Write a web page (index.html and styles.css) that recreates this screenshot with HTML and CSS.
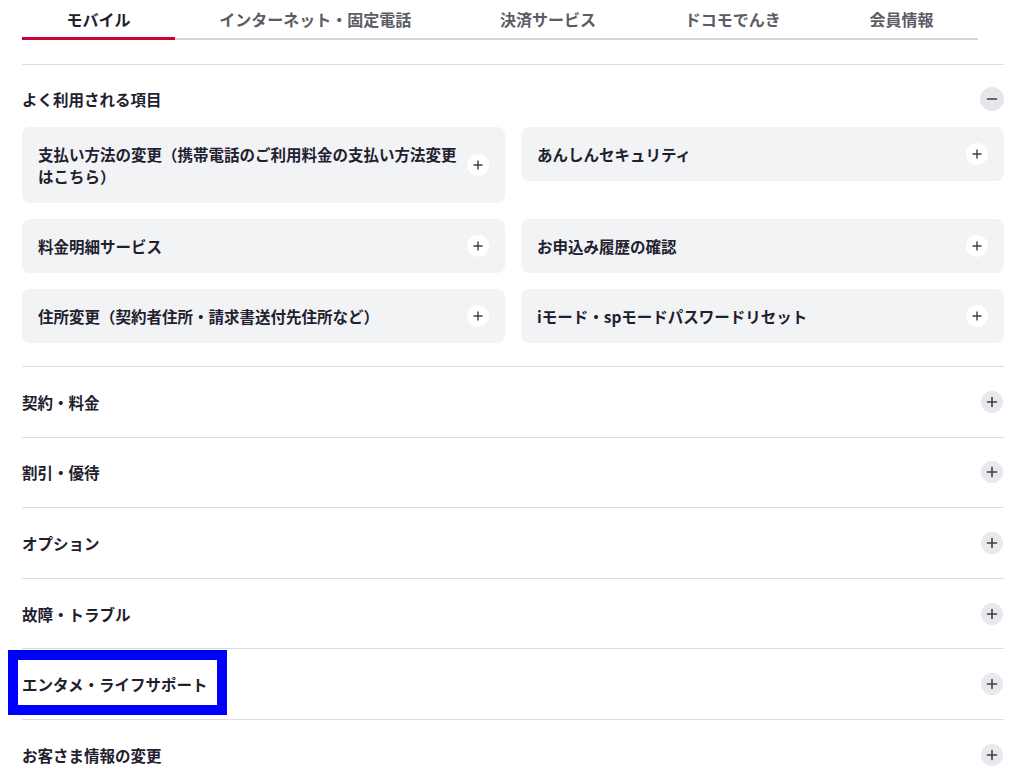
FILE: index.html
```html
<!DOCTYPE html>
<html lang="ja">
<head>
<meta charset="utf-8">
<link rel="stylesheet" href="styles.css">
</head>
<body>
<div class="page">
  <nav class="tabs">
    <div class="tab active">モバイル</div>
    <div class="tab">インターネット・固定電話</div>
    <div class="tab">決済サービス</div>
    <div class="tab">ドコモでんき</div>
    <div class="tab">会員情報</div>
  </nav>

  <div class="acc">
    <section class="sec open">
      <div class="sec-head">
        <span class="sec-title">よく利用される項目</span>
        <span class="ic ic-minus"><svg viewBox="0 0 24 24" width="24" height="24"><path d="M7.5 12h9" stroke="#3a3f4b" stroke-width="1.6" stroke-linecap="round"/></svg></span>
      </div>
      <div class="cards">
        <div class="card"><span class="card-text">支払い方法の変更（携帯電話のご利用料金の支払い方法変更はこちら）</span><span class="ic ic-card"><svg viewBox="0 0 22 22" width="22" height="22"><path d="M11 7v8M7 11h8" stroke="#3a3f4b" stroke-width="1.4" stroke-linecap="round"/></svg></span></div>
        <div class="card"><span class="card-text">あんしんセキュリティ</span><span class="ic ic-card"><svg viewBox="0 0 22 22" width="22" height="22"><path d="M11 7v8M7 11h8" stroke="#3a3f4b" stroke-width="1.4" stroke-linecap="round"/></svg></span></div>
        <div class="card"><span class="card-text">料金明細サービス</span><span class="ic ic-card"><svg viewBox="0 0 22 22" width="22" height="22"><path d="M11 7v8M7 11h8" stroke="#3a3f4b" stroke-width="1.4" stroke-linecap="round"/></svg></span></div>
        <div class="card"><span class="card-text">お申込み履歴の確認</span><span class="ic ic-card"><svg viewBox="0 0 22 22" width="22" height="22"><path d="M11 7v8M7 11h8" stroke="#3a3f4b" stroke-width="1.4" stroke-linecap="round"/></svg></span></div>
        <div class="card"><span class="card-text">住所変更（契約者住所・請求書送付先住所など）</span><span class="ic ic-card"><svg viewBox="0 0 22 22" width="22" height="22"><path d="M11 7v8M7 11h8" stroke="#3a3f4b" stroke-width="1.4" stroke-linecap="round"/></svg></span></div>
        <div class="card"><span class="card-text">iモード・spモードパスワードリセット</span><span class="ic ic-card"><svg viewBox="0 0 22 22" width="22" height="22"><path d="M11 7v8M7 11h8" stroke="#3a3f4b" stroke-width="1.4" stroke-linecap="round"/></svg></span></div>
      </div>
    </section>

    <section class="sec">
      <div class="sec-head"><span class="sec-title">契約・料金</span><span class="ic ic-plus"><svg viewBox="0 0 22 22" width="22" height="22"><path d="M11 6.5v9M6.5 11h9" stroke="#3a3f4b" stroke-width="1.6" stroke-linecap="round"/></svg></span></div>
    </section>
    <section class="sec">
      <div class="sec-head"><span class="sec-title">割引・優待</span><span class="ic ic-plus"><svg viewBox="0 0 22 22" width="22" height="22"><path d="M11 6.5v9M6.5 11h9" stroke="#3a3f4b" stroke-width="1.6" stroke-linecap="round"/></svg></span></div>
    </section>
    <section class="sec">
      <div class="sec-head"><span class="sec-title">オプション</span><span class="ic ic-plus"><svg viewBox="0 0 22 22" width="22" height="22"><path d="M11 6.5v9M6.5 11h9" stroke="#3a3f4b" stroke-width="1.6" stroke-linecap="round"/></svg></span></div>
    </section>
    <section class="sec">
      <div class="sec-head"><span class="sec-title">故障・トラブル</span><span class="ic ic-plus"><svg viewBox="0 0 22 22" width="22" height="22"><path d="M11 6.5v9M6.5 11h9" stroke="#3a3f4b" stroke-width="1.6" stroke-linecap="round"/></svg></span></div>
    </section>
    <section class="sec">
      <div class="sec-head"><span class="sec-title highlight">エンタメ・ライフサポート</span><span class="ic ic-plus"><svg viewBox="0 0 22 22" width="22" height="22"><path d="M11 6.5v9M6.5 11h9" stroke="#3a3f4b" stroke-width="1.6" stroke-linecap="round"/></svg></span></div>
    </section>
    <section class="sec">
      <div class="sec-head"><span class="sec-title">お客さま情報の変更</span><span class="ic ic-plus"><svg viewBox="0 0 22 22" width="22" height="22"><path d="M11 6.5v9M6.5 11h9" stroke="#3a3f4b" stroke-width="1.6" stroke-linecap="round"/></svg></span></div>
    </section>
  </div>
</div>
</body>
</html>
```

FILE: styles.css
```css
html, body {
  margin: 0;
  padding: 0;
  background: #fff;
}
body {
  font-family: "Noto Sans CJK JP", "Noto Sans", sans-serif;
  color: #1f2130;
}
.page {
  padding: 0 20px 0 22px;
}
.tabs {
  display: flex;
  width: 956px;
  border-bottom: 2px solid #d4d5d8;
  height: 38px;
  box-sizing: content-box;
}
.tab {
  flex: 1 1 auto;
  text-align: center;
  font-size: 16px;
  font-weight: 700;
  line-height: 22px;
  padding-top: 8px;
  color: #5b5d66;
  position: relative;
}
.tab.active {
  color: #1f2130;
}
.tab.active::after {
  content: "";
  position: absolute;
  left: 0;
  right: 0;
  bottom: -2px;
  height: 3px;
  background: #cc0033;
}
.acc {
  margin-top: 24px;
}
.sec {
  border-top: 1px solid #dcdde0;
}
.sec-head {
  display: flex;
  align-items: center;
  justify-content: space-between;
  padding: 23.8px 0;
}
.sec.open .sec-head {
  padding: 22px 0 16px;
}
.sec-title {
  display: block;
  font-size: 15.5px;
  font-weight: 700;
  line-height: 22px;
  position: relative;
}
.highlight::after {
  content: "";
  position: absolute;
  left: -14px;
  top: -23px;
  right: -19px;
  bottom: -20px;
  border: 10px solid #0000ff;
}
.ic {
  display: flex;
  align-items: center;
  justify-content: center;
  border-radius: 50%;
  flex: none;
}
.ic-minus {
  width: 24px;
  height: 24px;
  background: #e5e6ea;
}
.ic-plus {
  width: 22px;
  height: 22px;
  background: #e8e9ed;
  margin-right: 1px;
}
.ic-card {
  width: 22px;
  height: 22px;
  background: #fff;
}
.cards {
  display: grid;
  grid-template-columns: 1fr 1fr;
  column-gap: 16px;
  row-gap: 16px;
  align-items: start;
  padding-bottom: 23px;
}
.card {
  background: #f2f3f5;
  border-radius: 8px;
  padding: 16px;
  display: flex;
  align-items: center;
  gap: 8px;
}
.card-text {
  flex: 1;
  font-size: 15.5px;
  font-weight: 700;
  line-height: 22px;
}
```
